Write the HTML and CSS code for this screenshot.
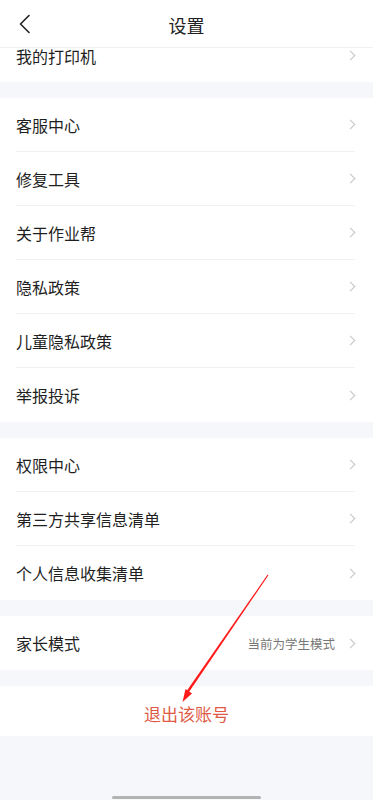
FILE: index.html
```html
<!DOCTYPE html>
<html lang="zh-CN">
<head>
<meta charset="utf-8">
<link rel="stylesheet" href="styles.css">
</head>
<body>
<div class="page">
  <header class="nav">
    <svg class="back" width="14" height="20" viewBox="0 0 14 20"><path d="M11 1.5 L2.5 10 L11 18.5" fill="none" stroke="#222" stroke-width="1.6" stroke-linecap="round" stroke-linejoin="round"/></svg>
    <div class="title">设置</div>
  </header>

  <div class="row row-partial"><span class="label">我的打印机</span><i class="chev"></i></div>

  <section class="group">
    <div class="row"><span class="label">客服中心</span><i class="chev"></i></div>
    <div class="row"><span class="label">修复工具</span><i class="chev"></i></div>
    <div class="row"><span class="label">关于作业帮</span><i class="chev"></i></div>
    <div class="row"><span class="label">隐私政策</span><i class="chev"></i></div>
    <div class="row"><span class="label">儿童隐私政策</span><i class="chev"></i></div>
    <div class="row"><span class="label">举报投诉</span><i class="chev"></i></div>
  </section>

  <section class="group">
    <div class="row"><span class="label">权限中心</span><i class="chev"></i></div>
    <div class="row"><span class="label">第三方共享信息清单</span><i class="chev"></i></div>
    <div class="row"><span class="label">个人信息收集清单</span><i class="chev"></i></div>
  </section>

  <section class="group">
    <div class="row"><span class="label">家长模式</span><span class="value">当前为学生模式</span><i class="chev"></i></div>
  </section>

  <section class="group logout">
    <div class="logout-text">退出该账号</div>
  </section>

  <div class="home-bar"></div>

  <svg class="arrow" width="373" height="800" viewBox="0 0 373 800">
    <polygon points="267.6,574.6 268.4,575.2 189,692 187,690.6" fill="#ff1a1a"/>
    <polygon points="182.5,702 185.5,689 192,693.5" fill="#ff1a1a"/>
  </svg>
</div>
</body>
</html>
```
FILE: styles.css
```css
* { box-sizing: border-box; }
html, body { margin: 0; padding: 0; }
body {
  background: #f6f7fa;
  font-family: "Noto Sans CJK SC", "Noto Sans", sans-serif;
  color: #222;
}
.page {
  position: relative;
  width: 373px;
  height: 800px;
  overflow: hidden;
  background: #f6f7fa;
}
.nav {
  position: relative;
  height: 48px;
  background: #fff;
  border-bottom: 1px solid #f1f1f1;
  display: flex;
  align-items: center;
  justify-content: center;
}
.back {
  position: absolute;
  left: 18px;
  top: 14px;
}
.title {
  font-size: 18px;
  line-height: 24px;
  color: #222;
  margin-top: 2px;
}
.group {
  background: #fff;
  margin-top: 16px;
}
.row {
  height: 54px;
  margin-left: 16px;
  margin-right: 18px;
  display: flex;
  align-items: center;
  border-bottom: 1px solid #f2f2f2;
}
.group .row:last-child { border-bottom: none; }
.row-partial {
  height: 34px;
  margin: 0;
  padding-left: 16px;
  padding-right: 18px;
  background: #fff;
  align-items: flex-start;
  border-bottom: none;
}
.row-partial .label { line-height: 16px; }
.row-partial .chev { margin-top: 4px; }
.label {
  flex: 1;
  font-size: 16px;
  line-height: 22px;
  color: #1f1f1f;
}
.value {
  font-size: 12.5px;
  color: #777;
  margin-right: 12px;
}
.chev {
  width: 7px;
  height: 7px;
  border-top: 1.3px solid #c4c4c4;
  border-right: 1.3px solid #c4c4c4;
  transform: rotate(45deg);
  margin-right: 1px;
}
.logout {
  height: 50px;
  display: flex;
  align-items: center;
  justify-content: center;
}
.logout-text {
  font-size: 17px;
  color: #de5a45;
  margin-top: 4px;
}
.home-bar {
  position: absolute;
  left: 112px;
  bottom: 1px;
  width: 149px;
  height: 3px;
  border-radius: 2px;
  background: #b3b3b3;
}
.arrow {
  position: absolute;
  left: 0;
  top: 0;
  pointer-events: none;
}
```
